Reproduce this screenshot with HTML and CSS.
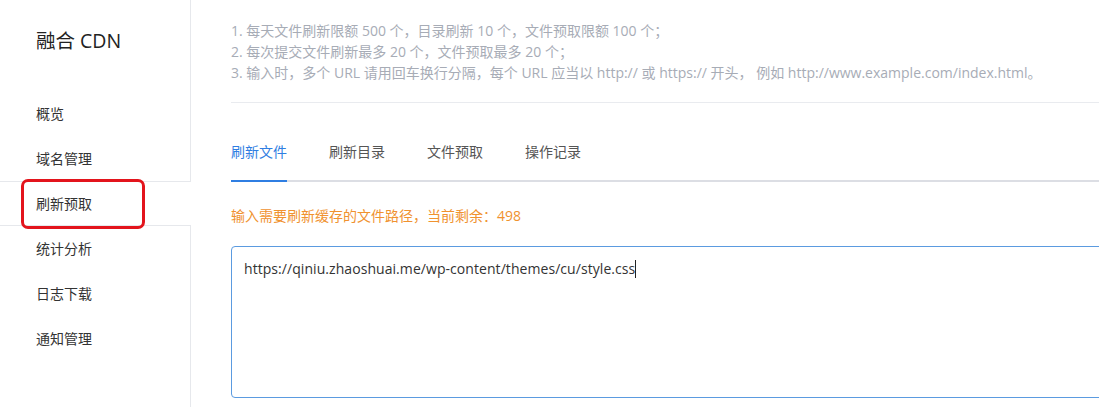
FILE: index.html
```html
<!DOCTYPE html>
<html lang="zh-CN">
<head>
<meta charset="utf-8">
<title>融合 CDN - 刷新预取</title>
<link rel="stylesheet" href="styles.css">
</head>
<body>
<div class="layout">
  <aside class="sidebar">
    <div class="brand">融合 CDN</div>
    <nav class="menu">
      <div class="menu-item">概览</div>
      <div class="menu-item">域名管理</div>
      <div class="menu-item active">刷新预取<span class="mark"></span></div>
      <div class="menu-item">统计分析</div>
      <div class="menu-item">日志下载</div>
      <div class="menu-item">通知管理</div>
    </nav>
  </aside>
  <main class="main">
    <div class="notes">
      <p>1. 每天文件刷新限额 500 个，目录刷新 10 个，文件预取限额 100 个；</p>
      <p>2. 每次提交文件刷新最多 20 个，文件预取最多 20 个；</p>
      <p>3. 输入时，多个 URL 请用回车换行分隔，每个 URL 应当以 http:// 或 https:// 开头， 例如 http://www.example.com/index.html。</p>
    </div>
    <div class="tabs">
      <div class="tab active">刷新文件</div>
      <div class="tab">刷新目录</div>
      <div class="tab">文件预取</div>
      <div class="tab">操作记录</div>
    </div>
    <div class="hint">输入需要刷新缓存的文件路径，当前剩余：498</div>
    <div class="input-box">https://qiniu.zhaoshuai.me/wp-content/themes/cu/style.css<span class="caret"></span></div>
  </main>
</div>
</body>
</html>
```
FILE: styles.css
```css
html, body {
  margin: 0;
  padding: 0;
  background: #fff;
}
body {
  font-family: "Open Sans", "Noto Sans CJK SC", sans-serif;
  font-size: 14px;
  color: #333;
  width: 1099px;
  height: 407px;
  overflow: hidden;
}
.layout {
  display: flex;
  height: 407px;
}
.sidebar {
  width: 190px;
  flex: none;
  border-right: 1px solid #e6e8ec;
}
.brand {
  padding: 28px 0 0 36px;
  height: 63px;
  font-size: 19.5px;
  line-height: 26px;
  color: #222;
}
.menu {
  display: flex;
  flex-direction: column;
}
.menu-item {
  position: relative;
  height: 43px;
  line-height: 43px;
  padding-left: 36px;
  border-top: 1px solid transparent;
  border-bottom: 1px solid transparent;
  color: #333;
}
.menu-item.active {
  margin-right: -1px;
  background: #fff;
  border-top-color: #e6e8ec;
  border-bottom-color: #e6e8ec;
}
.mark {
  position: absolute;
  left: 21px;
  top: -3px;
  width: 118px;
  height: 44px;
  border: 3px solid #e3141c;
  border-radius: 7px;
}
.main {
  flex: 1;
  min-width: 0;
  padding-left: 40px;
  overflow: hidden;
}
.notes {
  padding: 20px 0 19px;
  border-bottom: 1px solid #e9ebef;
  color: #a7acb6;
  line-height: 21px;
}
.notes p {
  margin: 0;
  white-space: nowrap;
}
.tabs {
  display: flex;
  gap: 42px;
  margin-top: 39px;
  border-bottom: 2px solid #dcdee4;
}
.tab {
  line-height: 20px;
  padding-bottom: 18px;
  margin-bottom: -2px;
  border-bottom: 2px solid transparent;
  color: #555;
}
.tab.active {
  color: #2f7ee2;
  border-bottom-color: #2f7ee2;
}
.hint {
  margin-top: 24px;
  line-height: 20px;
  color: #f0922f;
}
.input-box {
  margin-top: 20px;
  width: 1000px;
  height: 126px;
  padding: 12px 12px;
  border: 1px solid #5b9be0;
  border-radius: 4px;
  line-height: 20px;
  letter-spacing: 0.06px;
  color: #333;
}
.caret {
  display: inline-block;
  width: 1px;
  height: 18px;
  background: #222;
  vertical-align: -4px;
}
```
